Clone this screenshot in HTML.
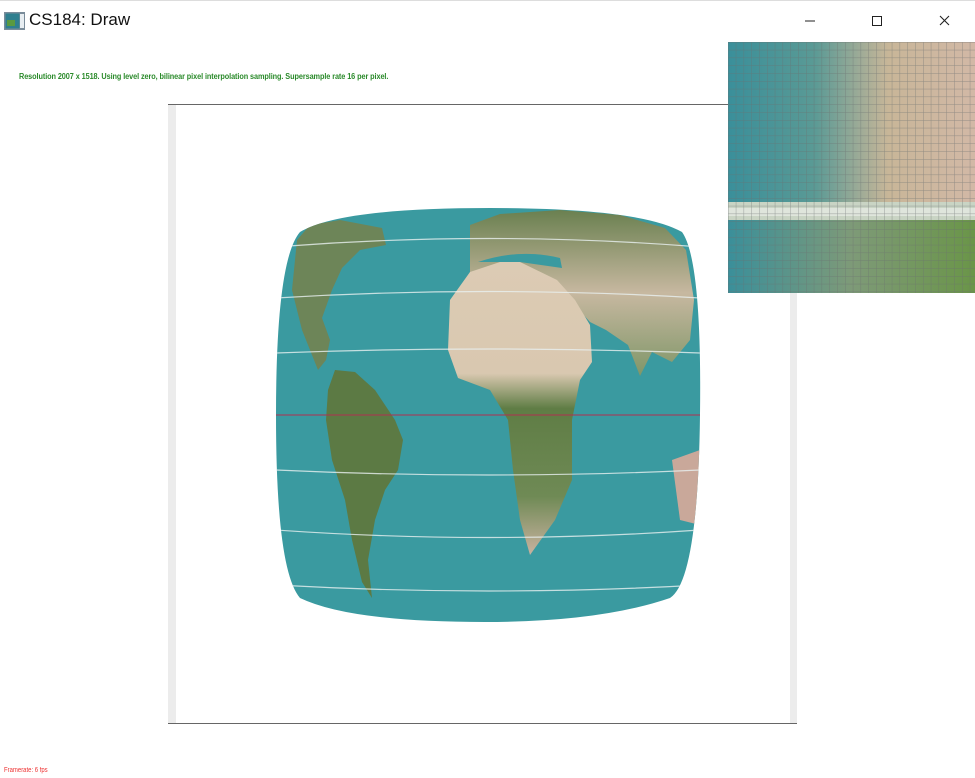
<!DOCTYPE html>
<html><head><meta charset="utf-8"><style>
html,body{margin:0;padding:0;width:975px;height:778px;overflow:hidden;background:#fff;font-family:"Liberation Sans",sans-serif;position:relative}
.top{position:absolute;left:0;top:0;width:975px;height:1px;background:#ddd}
.title{position:absolute;left:29px;top:10px;font-size:17px;color:#111}
.res{position:absolute;left:19px;top:71px;font-size:8.6px;font-weight:bold;color:#2a8a2a;letter-spacing:-0.1px;transform:scaleX(0.85);transform-origin:left}
.fps{position:absolute;left:4px;top:767px;font-size:7px;color:#e33;transform:scaleX(0.85);transform-origin:left}
</style></head><body>
<div class="top"></div>
<svg style="position:absolute;left:4px;top:12px" width="21" height="18" viewBox="0 0 21 18"><rect x="0" y="0" width="21" height="18" fill="#7a8c9a"/><rect x="1.5" y="1.5" width="14" height="15" fill="#2f7f8f"/><rect x="3" y="8" width="8" height="6" fill="#5a9a40"/><rect x="16" y="2" width="4" height="14" fill="#e8eef2"/></svg>
<div class="title">CS184: Draw</div>
<div class="res">Resolution 2007 x 1518. Using level zero, bilinear pixel interpolation sampling. Supersample rate 16 per pixel.</div>
<svg style="position:absolute;left:0;top:0" width="975" height="778">
<defs>
<clipPath id="g"><path d="M300,232 Q340,208 490,208 Q640,208 682,232 Q702,260 700,415 Q698,580 670,598 Q600,622 485,622 Q350,622 300,598 Q276,570 276,415 Q276,260 300,232Z"/></clipPath>
<linearGradient id="af" x1="0" y1="0" x2="0" y2="1"><stop offset="0" stop-color="#dccbb4"/><stop offset="0.38" stop-color="#d9c8b0"/><stop offset="0.5" stop-color="#5f7d45"/><stop offset="0.8" stop-color="#6f8a55"/><stop offset="1" stop-color="#c9b2a0"/></linearGradient>
<linearGradient id="eu" x1="0" y1="0" x2="0" y2="1"><stop offset="0" stop-color="#6a8050"/><stop offset="0.5" stop-color="#c7b8a0"/><stop offset="1" stop-color="#7f9668"/></linearGradient>
<linearGradient id="zp" x1="0" y1="0" x2="1" y2="0"><stop offset="0" stop-color="#3a8f9a"/><stop offset="0.35" stop-color="#5a9a95"/><stop offset="0.65" stop-color="#c8b698"/><stop offset="1" stop-color="#d2b8a6"/></linearGradient>
<linearGradient id="zb" x1="0" y1="0" x2="1" y2="0"><stop offset="0" stop-color="#3a8f9a"/><stop offset="0.5" stop-color="#7e9a78"/><stop offset="1" stop-color="#6a9548"/></linearGradient>
<pattern id="grid" width="7.8" height="7.8" patternUnits="userSpaceOnUse" x="728" y="42"><path d="M0,0H7.8M0,0V7.8" stroke="#6a7070" stroke-opacity="0.6" stroke-width="1" fill="none"/></pattern>
</defs>
<rect x="168" y="104" width="629" height="620" fill="#fff"/>
<rect x="168" y="104" width="8" height="620" fill="#ececec"/>
<rect x="790" y="104" width="7" height="620" fill="#ececec"/>
<line x1="168" y1="104.5" x2="797" y2="104.5" stroke="#666"/>
<line x1="168" y1="723.5" x2="797" y2="723.5" stroke="#666"/>
<g clip-path="url(#g)">
<rect x="270" y="200" width="440" height="430" fill="#3a9aa0"/>
<path d="M297,240 L310,225 L340,220 L382,228 L386,245 L360,250 L342,268 L332,290 L322,318 L330,340 L326,360 L318,370 L302,330 L292,290Z" fill="#6d8558"/>
<path d="M335,370 L355,372 L375,390 L395,420 L403,440 L398,470 L385,490 L375,520 L368,560 L372,598 L362,582 L352,540 L345,500 L332,460 L326,420 L328,390Z" fill="#5c7a44"/>
<path d="M470,225 L500,214 L560,210 L620,215 L665,228 L686,250 L694,300 L690,340 L672,362 L652,352 L640,376 L628,345 L606,330 L590,322 L570,300 L555,282 L520,282 L470,278Z" fill="url(#eu)"/>
<path d="M470,272 L500,262 L520,262 L557,280 L575,300 L590,325 L592,362 L580,380 L572,420 L572,480 L555,520 L530,555 L520,520 L513,470 L508,420 L490,390 L458,378 L448,350 L450,300Z" fill="url(#af)"/>
<path d="M478,262 Q520,248 560,258 L562,268 L520,262 Z" fill="#3a9aa0"/>
<path d="M672,460 L700,450 L700,525 L680,520 Z" fill="#c9a89a"/>
<path d="M276,247 Q490,230 700,247 M276,298 Q490,285 700,298 M276,353 Q490,345 700,353 M276,470 Q490,480 700,470 M276,530 Q490,545 700,530 M276,585 Q490,597 700,585" stroke="#e8f0f0" stroke-width="1.2" fill="none" opacity="0.8"/>
<line x1="276" y1="415" x2="700" y2="415" stroke="#b03050" stroke-width="1"/>
</g>
<rect x="728" y="42" width="247" height="160" fill="url(#zp)"/>
<rect x="728" y="202" width="247" height="18" fill="#c9d4c4"/>
<rect x="728" y="208" width="247" height="8" fill="#dfe5dc"/>
<rect x="728" y="220" width="247" height="73" fill="url(#zb)"/>
<rect x="728" y="42" width="247" height="251" fill="url(#grid)"/>
<line x1="805" y1="21" x2="815" y2="21" stroke="#222" stroke-width="1"/>
<rect x="872.5" y="16.5" width="9" height="9" fill="none" stroke="#222"/>
<path d="M940,16 L949,25 M949,16 L940,25" stroke="#222" stroke-width="1.1"/>
</svg>
<div class="fps">Framerate: 6 fps</div>
</body></html>
